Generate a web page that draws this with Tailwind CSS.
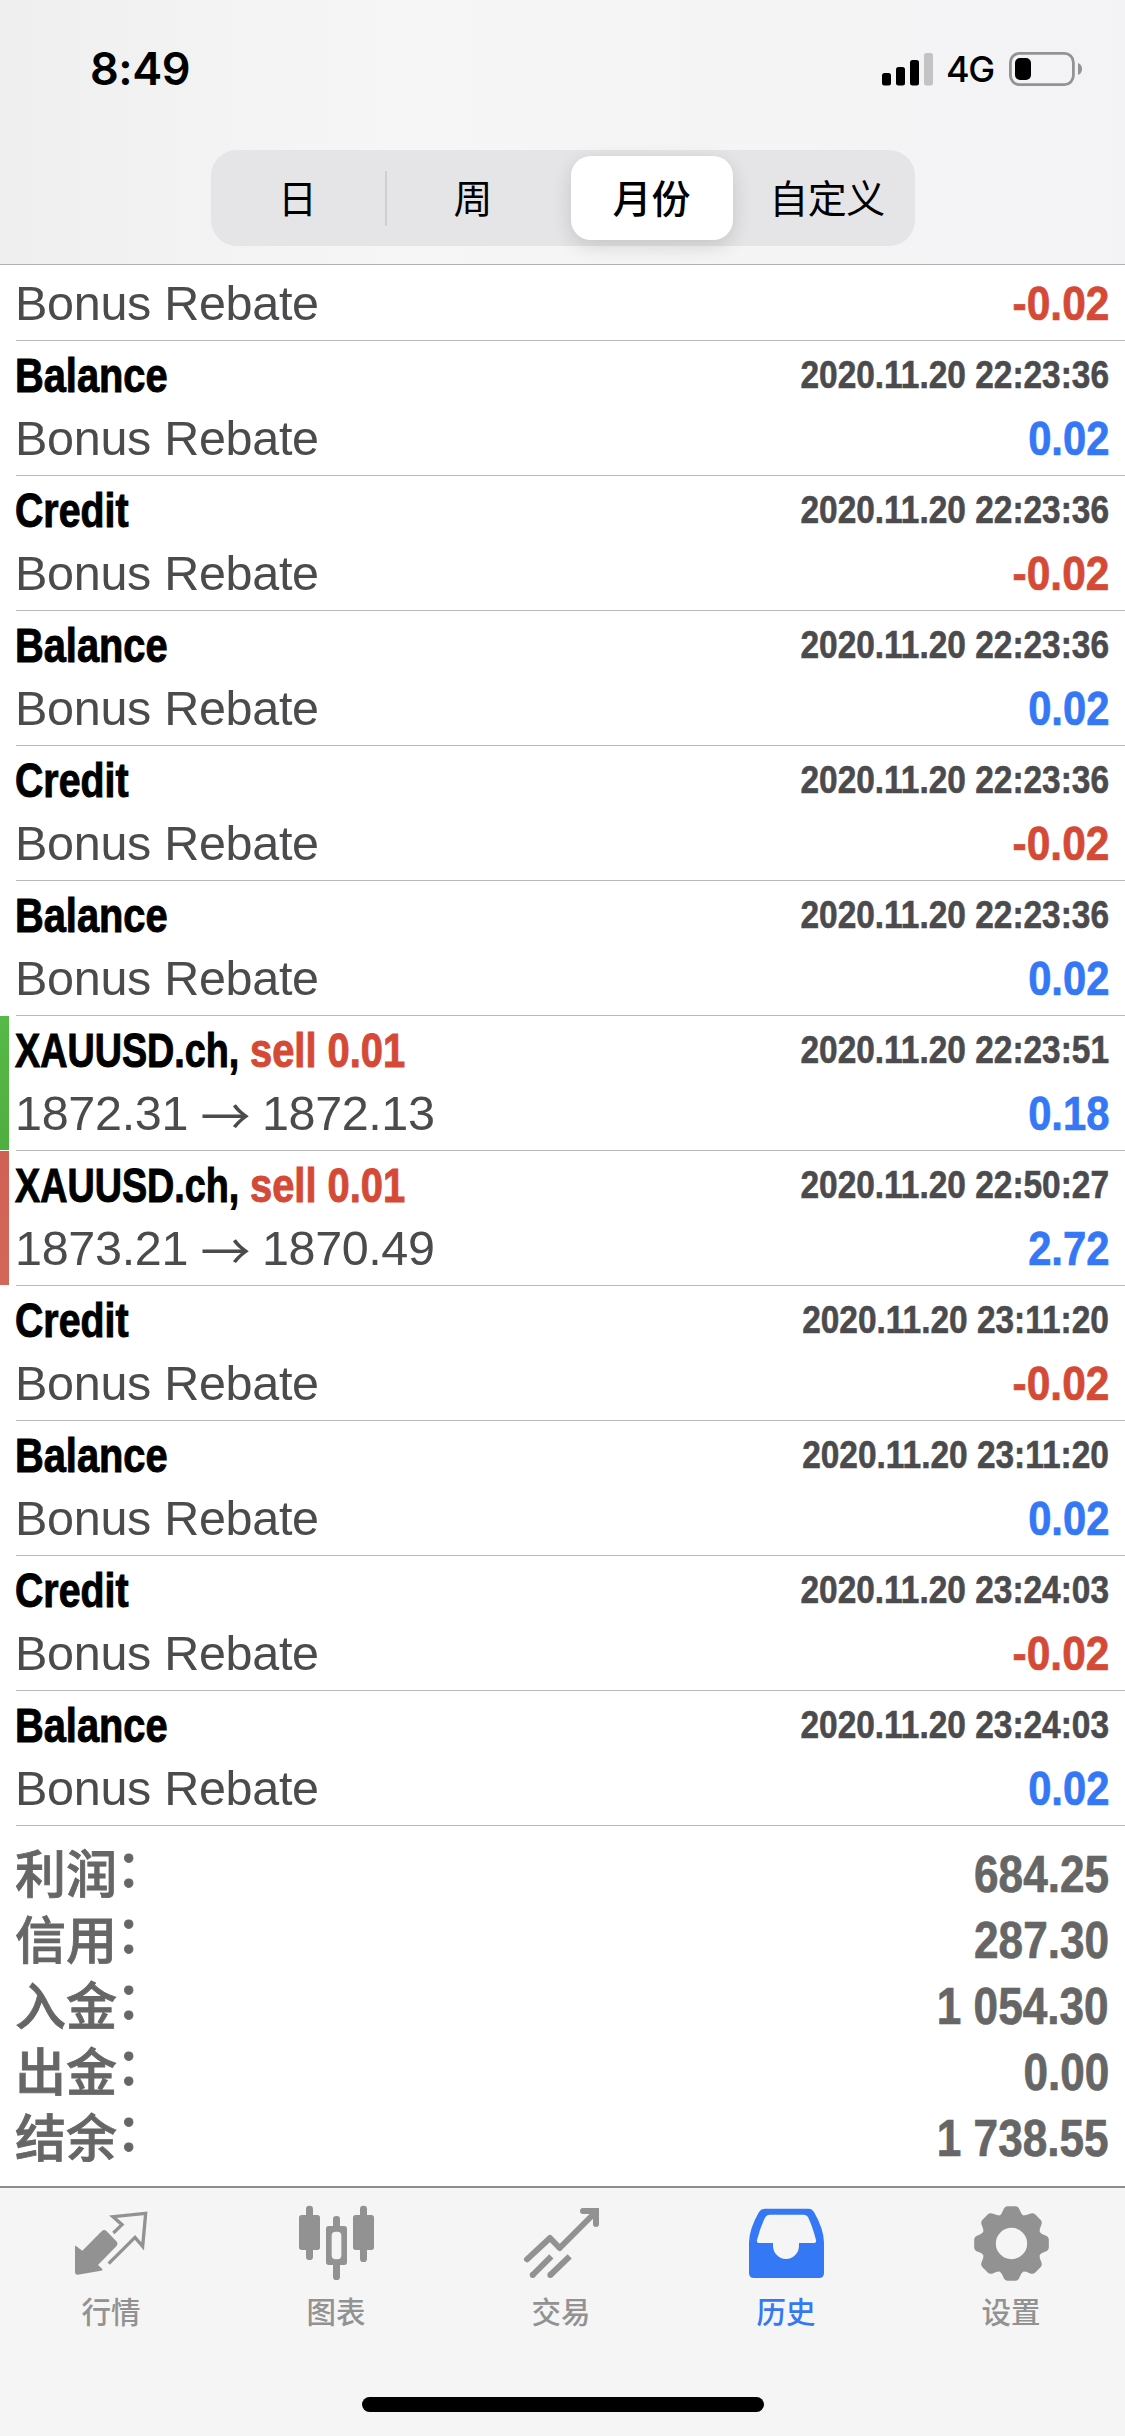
<!DOCTYPE html>
<html lang="zh-CN">
<head>
<meta charset="utf-8">
<title>历史</title>
<script src="https://cdn.jsdelivr.net/npm/@tailwindcss/browser@4"></script>
</head>
<body class="w-[1125px] h-[2436px] overflow-hidden bg-white flex flex-col font-['Liberation_Sans','Noto_Sans_CJK_SC',sans-serif] whitespace-nowrap">
<header class="h-[265px] shrink-0 border-b border-[#b2b2b2] bg-linear-to-r from-[#efeff0] via-[#f6f6f6] via-35% to-[#f3f3f5] flex flex-col items-center">
  <div class="w-full h-[150px] flex justify-between pl-[90px] pr-[42px] font-['Inter',sans-serif] text-black">
    <span class="text-[45px] font-semibold leading-[138px] tracking-[-0.5px]">8:49</span>
    <div class="flex items-center h-[138px]">
      <svg class="w-[51px] h-[34px]" viewBox="0 0 51 34"><rect x="0" y="21" width="9" height="12.5" rx="2.5"/><rect x="14" y="15" width="9" height="18.5" rx="2.5"/><rect x="28" y="8" width="9" height="25.5" rx="2.5"/><rect x="42" y="1" width="9" height="32.5" rx="2.5" fill="#c3c3c3"/></svg>
      <span class="text-[36px] font-medium leading-[140px] ml-[13px] w-[63px] tracking-[-1.3px]">4G</span>
      <svg class="w-[74px] h-[34px]" viewBox="0 0 74 34"><rect x="1.4" y="1.4" width="63" height="31.200" rx="9" fill="none" stroke="#939393" stroke-width="2.8"/><rect x="6" y="6" width="16" height="22" rx="5"/><path d="M69 11q4 1.500 4 6t-4 6z" fill="#939393"/></svg>
    </div>
  </div>
  <div class="w-[704px] h-[96px] rounded-[26px] bg-[#e5e5e7] flex items-center text-[39px] leading-[80px] text-center text-black p-[6px] font-['Noto_Sans_CJK_SC',sans-serif]">
    <span class="w-[162px] h-[84px]">日</span>
    <i class="w-[2px] h-[55px] mx-[6px] bg-[#cfcfd1]"></i>
    <span class="w-[161px] h-[84px]">周</span>
    <span class="w-[162px] h-[84px] mx-[17px] shrink-0 bg-white rounded-[20px] shadow-[0_6px_20px_rgba(0,0,0,0.14)] font-medium">月份</span>
    <span class="flex-1 h-[84px] pr-[4px] tracking-[-0.5px]">自定义</span>
  </div>
</header>
<main id="list" class="shrink-0"></main>
<section id="sum" class="h-[360px] shrink-0 pt-[15px] px-4 text-[#666]"></section>
<nav class="h-[250px] shrink-0 border-t-2 border-[#8c8c8c] bg-[#f5f5f5] text-[#929292] flex flex-col items-center">
  <div class="w-full grid grid-cols-5 text-[29.5px] leading-[44px] text-center font-['Noto_Sans_CJK_SC',sans-serif] font-medium">
    <div class="flex flex-col">
      <svg class="w-[225px] h-[100px] fill-current" viewBox="-120 24 675 300"><path d="M105 199q0-3 4 0l18 13 58-58q8-8 15 0l29 30q7 8 0 15l-55 56 12 11q4 4-3 6l-70 12q-8 0-8-9z"/><path d="M220 159l26-25-27-24 98-10-9 99-23-27-79 79" fill="none" stroke="currentColor" stroke-width="10"/></svg>
      <span class="pr-[3px]">行情</span>
    </div>
    <div class="flex flex-col">
      <svg class="w-[225px] h-[100px] fill-current" viewBox="555 24 675 300"><rect x="777" y="105" width="63" height="105" rx="8"/><rect x="798" y="77" width="21" height="163" rx="10"/><rect x="939" y="105" width="63" height="105" rx="8"/><rect x="960" y="77" width="21" height="169" rx="10"/><rect x="858" y="138" width="63" height="117" rx="8"/><rect x="879" y="108" width="21" height="192" rx="10"/><rect x="875" y="155" width="29" height="83" rx="12" fill="#f5f5f5"/></svg>
      <span class="pr-[3px]">图表</span>
    </div>
    <div class="flex flex-col">
      <svg class="w-[225px] h-[100px]" viewBox="-90 24 675 300" fill="none" stroke="currentColor" stroke-width="18"><path d="M141 238l69-64 29 30 108-108" stroke-linecap="round" stroke-linejoin="round"/><path d="M309 93h39v39" stroke-linecap="round" stroke-linejoin="miter"/><path d="M214 229l-56 56M269 229l-58 56"/><g fill="currentColor" stroke="none"><circle cx="158" cy="285" r="9"/><circle cx="211" cy="285" r="9"/></g></svg>
      <span class="pr-[3px]">交易</span>
    </div>
    <div class="flex flex-col text-[#3478f6]">
      <svg class="w-[225px] h-[100px] fill-current" viewBox="585 24 675 300"><path fill-rule="evenodd" d="M855 86H985q11 0 17 10 29 50 30 91v92q0 15-15 15H822q-15 0-15-15V187q1-41 30-91 6-10 18-10zM870 104q-10 0-15 9-14 28-24 67-2 9 8 9h40v8a39 40 0 0 0 78 0v-8h43q10 0 8-9-10-39-23-67-4-9-15-9z"/></svg>
      <span class="pr-[3px]">历史</span>
    </div>
    <div class="flex flex-col">
      <svg class="w-[225px] h-[100px]" viewBox="0 24 675 300"><g id="gear" fill="currentColor" transform="translate(334.500 190.500)"></g></svg>
      <span class="pr-[3px]">设置</span>
    </div>
  </div>
  <div class="mt-[65px] w-[402px] h-[15px] rounded-full bg-black"></div>
</nav>
<script>
const D = '2020.11.20 ';
const rows = [
 ['','','-0.02'],['Balance','22:23:36','0.02'],['Credit','22:23:36','-0.02'],['Balance','22:23:36','0.02'],
 ['Credit','22:23:36','-0.02'],['Balance','22:23:36','0.02'],
 ['XAUUSD.ch,','22:23:51','0.18','1872.31','1872.13','bg-linear-to-b from-[#57b947] to-[#4fae40]'],
 ['XAUUSD.ch,','22:50:27','2.72','1873.21','1870.49','bg-linear-to-b from-[#cf6154] to-[#d2675a]'],
 ['Credit','23:11:20','-0.02'],['Balance','23:11:20','0.02'],['Credit','23:24:03','-0.02'],['Balance','23:24:03','0.02']];
document.getElementById('list').innerHTML = rows.map(([name,time,val,a,b,bar]) => {
  const color = val[0]==='-' ? 'text-[#d54a36] scale-x-[0.885]' : 'text-[#3478f6] scale-x-[0.87]';
  const title = a
    ? `<span class="inline-block origin-left scale-x-[0.778] w-[226px] text-black">${name}</span><span class="inline-block origin-left scale-x-[0.822] text-[#d54a36] ml-[9px]">sell 0.01</span>`
    : `<span class="inline-block origin-left ${name==='Credit' ? 'scale-x-[0.81]' : 'scale-x-[0.82]'} text-black">${name}</span>`;
  const sub = a
    ? `<span class="w-[180px] tracking-[-0.3px]">${a}</span><span class="w-[67px] text-center text-[50px] font-['Noto_Sans_CJK_SC',sans-serif] pr-[6px]">→</span><span class="tracking-[-0.4px]">${b}</span>`
    : `<span class="tracking-[-0.3px]">Bonus Rebate</span>`;
  const head = name ? `<div class="flex justify-between h-[69px] font-bold"><div class="text-[48.5px] leading-[68px] -ml-px [-webkit-text-stroke:1px_currentColor]">${title}</div><span class="origin-right scale-x-[0.857] text-[39px] leading-[68px] text-[#4b4b4e] [-webkit-text-stroke:0.6px_currentColor]">${D}${time}</span></div>` : '';
  return `<div class="flex ${name ? 'h-[135px]' : 'h-[76px] pt-[10px]'}">
    <i class="w-[9px] h-[134px] ${bar || ''} ${name ? '' : 'hidden'}"></i>
    <div class="flex-1 ${name ? 'ml-[7px]' : 'ml-4'} pr-4 border-b border-[#b9b9bb]">
      ${head}
      <div class="flex justify-between h-[57px]"><div class="flex -ml-px text-[48.5px] leading-[57px] text-[#4b4b4e]">${sub}</div><span class="origin-right text-[48px] leading-[57px] font-bold [-webkit-text-stroke:0.7px_currentColor] ${color}">${val}</span></div>
    </div></div>`;
}).join('');
document.getElementById('sum').innerHTML = [['利润','684.25'],['信用','287.30'],['入金','1 054.30'],['出金','0.00'],['结余','1 738.55']]
  .map(([k,v]) => `<div class="flex justify-between h-[66px]"><div class="flex -ml-px text-[51px] leading-[61px] font-medium [-webkit-text-stroke:0.8px_currentColor] font-['Noto_Sans_CJK_SC',sans-serif]"><span>${k}</span><span class="-mt-[6px] -ml-px">：</span></div><span class="origin-right scale-x-[0.865] text-[51px] leading-[68px] font-bold [-webkit-text-stroke:0.7px_currentColor]">${v}</span></div>`).join('');
const tooth = 'M-36 -83Q-29 -89 -25 -100Q-21 -112 -11 -112H11Q21 -112 25 -100Q29 -89 36 -83L20 -50H-20Z';
document.getElementById('gear').innerHTML = [0,45,90,135,180,225,270,315].map(r => `<path d="${tooth}" transform="rotate(${r})"/>`).join('') + '<circle r="67.5" fill="none" stroke="currentColor" stroke-width="41"/>';
</script>
</body>
</html>
